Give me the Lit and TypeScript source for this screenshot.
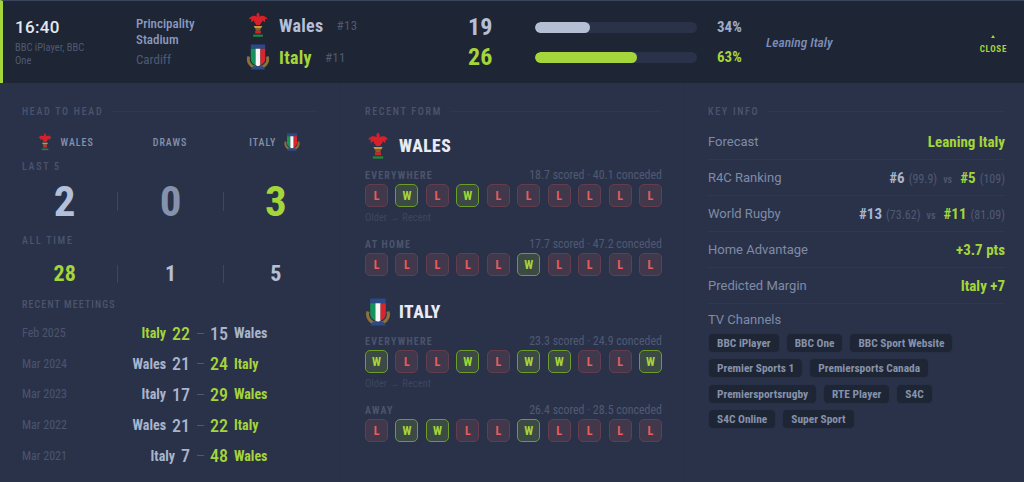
import { LitElement, html, css, svg } from "lit";
import { customElement } from "lit/decorators.js";

const walesCrest = svg`
  <g fill="#d6202a">
    <path d="M12 .5c1.700 1.300 2 3 1.300 4.500 1.500-1 3.300-1.300 5.100-.7 1.700.6 3 1.800 3.600 3.500-1.100-.6-2.100-.6-2.900 0 .5 1 .4 2-.3 2.900-.6-1-1.400-1.700-2.500-1.900.1 1.300-.4 2.300-1.400 3.100l-.9 1.600h-3.800l-.9-1.600c-1-.8-1.500-1.800-1.400-3.100-1.100.2-1.900.9-2.500 1.900-.7-.9-.8-1.900-.3-2.900-.8-.6-1.800-.6-2.900 0 .6-1.700 1.900-2.900 3.600-3.500 1.800-.6 3.600-.3 5.100.7C10 3.500 10.300 1.800 12 .5z"/>
    <rect x="9" y="19.500" width="6" height="2.800" rx=".6"/>
  </g>
  <path d="M7.500 14.500h9l-1.200 2.200H8.700z" fill="#c49a3e"/>
  <path d="M9 16.700h6l-.8 2.800H9.800z" fill="#8f5a2c"/>
  <rect x="7" y="23.500" width="10" height="2.200" fill="#1f8a3a"/>
`;

const italyCrest = svg`
  <path d="M2.500 13c-2 5 1.500 10.500 7.500 11.500M21.500 13c2 5-1.500 10.500-7.500 11.500" fill="none" stroke="#8a7238" stroke-width="3"/>
  <path d="M7 23h10l2.500 3.500h-15z" fill="#2c4a86"/>
  <rect x="4.500" y=".5" width="15" height="4.500" fill="#2c4a86"/>
  <path d="M4.500 5h5v17c-3-1.300-5-3.500-5-6.500z" fill="#16935a"/>
  <path d="M9.500 5h5v17l-2.500 1-2.500-1z" fill="#f7f7f7"/>
  <path d="M14.500 5h5v10.500c0 3-2 5.200-5 6.500z" fill="#d8262f"/>
`;

const crest = (team: string, w: number, h: number) => html`
  <svg class="crest" width=${w} height=${h} viewBox="0 0 24 27">
    ${team === "wales" ? walesCrest : italyCrest}
  </svg>
`;

const meetings = [
  { date: "Feb 2025", home: "Italy", hs: 22, as: 15, away: "Wales", homeWon: true },
  { date: "Mar 2024", home: "Wales", hs: 21, as: 24, away: "Italy", homeWon: false },
  { date: "Mar 2023", home: "Italy", hs: 17, as: 29, away: "Wales", homeWon: false },
  { date: "Mar 2022", home: "Wales", hs: 21, as: 22, away: "Italy", homeWon: false },
  { date: "Mar 2021", home: "Italy", hs: 7, as: 48, away: "Wales", homeWon: false },
];

const form = [
  {
    team: "wales",
    name: "WALES",
    rows: [
      { label: "EVERYWHERE", stats: "18.7 scored · 40.1 conceded", res: "LWLWLLLLLL", hint: true },
      { label: "AT HOME", stats: "17.7 scored · 47.2 conceded", res: "LLLLLWLLLL", hint: false },
    ],
  },
  {
    team: "italy",
    name: "ITALY",
    rows: [
      { label: "EVERYWHERE", stats: "23.3 scored · 24.9 conceded", res: "WLLWLWWLLW", hint: true },
      { label: "AWAY", stats: "26.4 scored · 28.5 conceded", res: "LWWLLWLLLL", hint: false },
    ],
  },
];

const channels = [
  "BBC iPlayer",
  "BBC One",
  "BBC Sport Website",
  "Premier Sports 1",
  "Premiersports Canada",
  "Premiersportsrugby",
  "RTE Player",
  "S4C",
  "S4C Online",
  "Super Sport",
];

@customElement("app-root")
export class AppRoot extends LitElement {
  static styles = css`
    :host {
      display: block;
      width: 1024px;
      height: 482px;
      overflow: hidden;
      background: #2a324a;
      font-family: Roboto, "Liberation Sans", sans-serif;
      color: #b4bfd4;
    }
    .cond {
      font-stretch: 75%;
    }
    .crest {
      display: block;
      flex: none;
    }
    header {
      display: flex;
      align-items: center;
      height: 83px;
      box-sizing: border-box;
      background: #1e2535;
      border-top: 1px solid #3a4560;
      border-left: 3px solid #a4d53a;
    }
    .time {
      width: 133px;
      box-sizing: border-box;
      padding: 0 40px 0 12px;
      flex: none;
    }
    .time b {
      display: block;
      font-size: 17px;
      font-weight: 500;
      letter-spacing: 0.3px;
      color: #e4e8f0;
      line-height: 19px;
      margin-bottom: 4px;
    }
    .time span {
      display: block;
      font-size: 10.500px;
      line-height: 13px;
      color: #4f5a72;
    }
    .venue {
      width: 110px;
      flex: none;
      font-size: 13px;
      line-height: 16px;
    }
    .venue b {
      display: block;
      font-weight: 500;
      color: #8c9ac0;
      width: 70px;
    }
    .venue span {
      display: block;
      color: #4f5a72;
      margin-top: 4px;
    }
    .teams {
      width: 222px;
      flex: none;
      display: flex;
      flex-direction: column;
      gap: 2px;
      padding-bottom: 2px;
    }
    .team {
      display: flex;
      align-items: center;
      gap: 9px;
      height: 30px;
      font-size: 18px;
      font-weight: 700;
      letter-spacing: 0.3px;
      color: #b4bfd8;
    }
    .team.win,
    .score.win,
    .pct.win {
      color: #a4d53a;
    }
    .team small {
      font-size: 13px;
      font-weight: 400;
      color: #4f5a72;
      margin-left: 4px;
    }
    .scores {
      width: 67px;
      flex: none;
      display: flex;
      flex-direction: column;
    }
    .score {
      height: 30px;
      line-height: 30px;
      font-size: 24px;
      font-weight: 700;
      color: #b4bfd8;
    }
    .bars {
      width: 231px;
      flex: none;
      display: flex;
      flex-direction: column;
    }
    .bar-row {
      display: flex;
      align-items: center;
      gap: 20px;
      height: 30px;
    }
    .track {
      width: 162px;
      height: 11px;
      border-radius: 6px;
      background: #2a324a;
      overflow: hidden;
    }
    .fill {
      height: 100%;
      border-radius: 6px;
      background: #b4bfd4;
    }
    .fill.win {
      background: #a4d53a;
    }
    .pct {
      font-size: 15px;
      font-weight: 700;
      color: #9fadcc;
    }
    .lean {
      flex: 1;
      font-size: 13.500px;
      font-weight: 500;
      font-style: italic;
      color: #7d8fb8;
    }
    .close {
      flex: none;
      margin-right: 17px;
      display: flex;
      flex-direction: column;
      align-items: center;
      padding-top: 4px;
      font-size: 9px;
      font-weight: 700;
      letter-spacing: 0.7px;
      color: #a4d53a;
    }
    .close i {
      display: block;
      width: 0;
      height: 0;
      margin-bottom: 6px;
      border-left: 2px solid transparent;
      border-right: 2px solid transparent;
      border-bottom: 3px solid #a4d53a;
    }
    main {
      display: grid;
      grid-template-columns: 340px 344px 340px;
      height: 399px;
    }
    section {
      box-sizing: border-box;
      padding: 22px 22px 0 22px;
    }
    section + section {
      border-left: 1px solid #283046;
      padding-left: 24px;
    }
    section:last-child {
      padding: 22px 19px 0 23px;
    }
    .head {
      display: flex;
      align-items: center;
      gap: 8px;
      height: 12px;
      font-size: 10px;
      font-weight: 500;
      letter-spacing: 1.700px;
      color: #4a556d;
      white-space: nowrap;
    }
    .head::after {
      content: "";
      flex: 1;
      height: 1px;
      background: #2f3850;
    }
    .h2h {
      display: grid;
      grid-template-columns: 1fr 1fr 1fr;
      align-items: center;
      justify-items: center;
      margin: 13px -10px 7px;
      height: 24px;
      font-size: 10px;
      font-weight: 500;
      letter-spacing: 1px;
      color: #8692ab;
    }
    .h2h div {
      display: flex;
      align-items: center;
      gap: 7px;
    }
    .sub {
      font-size: 10px;
      font-weight: 500;
      letter-spacing: 1.700px;
      color: #4a556d;
      line-height: 12px;
    }
    .sub.tight {
      letter-spacing: 1.100px;
    }
    .tally {
      display: grid;
      grid-template-columns: 1fr 1fr 1fr;
      align-items: center;
      margin-left: -10px;
      margin-right: -10px;
      font-weight: 700;
      color: #b4bfd8;
    }
    .tally div {
      text-align: center;
    }
    .tally div + div {
      border-left: 1px solid #3b465f;
    }
    .tally.big {
      height: 47px;
      margin-top: 5px;
      margin-bottom: 10px;
      font-size: 43px;
    }
    .tally.big div {
      line-height: 19px;
      height: 19px;
    }
    .tally.small {
      height: 30px;
      margin-top: 12px;
      margin-bottom: 10px;
      font-size: 22px;
    }
    .tally.small div {
      line-height: 18px;
      height: 18px;
    }
    .tally .win {
      color: #a4d53a;
    }
    .tally .draw {
      color: #8692ab;
    }
    .meetings {
      margin-top: 7px;
    }
    .meet {
      display: grid;
      grid-template-columns: 90px 78px 20px 1fr;
      align-items: center;
      height: 30.600px;
    }
    .meet .date {
      font-size: 12px;
      color: #4a556d;
    }
    .side {
      display: flex;
      align-items: center;
      gap: 6px;
      font-size: 14px;
      font-weight: 700;
      color: #a9b5cc;
    }
    .side.l {
      justify-content: flex-end;
    }
    .side b {
      font-size: 18px;
      font-weight: 500;
    }
    .side.win {
      color: #a4d53a;
    }
    .dash {
      width: 7px;
      height: 1px;
      justify-self: center;
      background: #4f5a72;
    }
    .form-team {
      display: flow-root;
      margin-top: 15px;
    }
    .form-team + .form-team {
      margin-top: 10px;
    }
    .fteam {
      display: flex;
      align-items: center;
      gap: 8px;
      height: 28px;
      margin-bottom: 8px;
      font-size: 17.500px;
      font-weight: 800;
      letter-spacing: 0.5px;
      color: #e8ebf2;
    }
    .frow {
      margin-bottom: 12px;
    }
    .frow-head {
      display: flex;
      justify-content: space-between;
      align-items: center;
      height: 14px;
      font-size: 11.900px;
      color: #4f5a72;
    }
    .frow-head b {
      font-size: 10px;
      font-weight: 700;
      letter-spacing: 1.250px;
      color: #4a556d;
    }
    .pills {
      display: flex;
      justify-content: space-between;
      margin-top: 2px;
    }
    .pill {
      width: 23px;
      height: 23px;
      box-sizing: border-box;
      border-radius: 5px;
      display: flex;
      align-items: center;
      justify-content: center;
      font-size: 12px;
      font-weight: 700;
      border: 1px solid #643e4e;
      background: #41384b;
      color: #e85d5d;
    }
    .pill.w {
      border-color: #6e9c2a;
      background: #3c4a45;
      color: #a4d53a;
    }
    .hint {
      font-size: 10.500px;
      color: #3b465f;
      margin-top: 4px;
      line-height: 14px;
    }
    .infos {
      margin-top: 7px;
    }
    .info {
      display: flex;
      justify-content: space-between;
      align-items: center;
      height: 36px;
      box-sizing: border-box;
      border-bottom: 1px solid #2f3850;
      font-size: 13px;
      font-stretch: 100%;
      color: #7f8ba5;
    }
    .info .v {
      display: flex;
      align-items: baseline;
      gap: 4px;
      font-size: 15px;
      font-stretch: 75%;
      font-weight: 700;
      color: #a4d53a;
    }
    .v .a {
      color: #a9b5cc;
    }
    .v small {
      font-size: 12px;
      font-weight: 400;
      color: #4f5a72;
    }
    .v em {
      font-style: normal;
      font-size: 10px;
      font-weight: 500;
      color: #4f5a72;
      margin: 0 4px 0 2px;
    }
    .tv {
      font-size: 13px;
      font-stretch: 100%;
      color: #7f8ba5;
      margin-top: 7px;
      line-height: 18px;
    }
    .chips {
      display: flex;
      flex-wrap: wrap;
      gap: 5.400px 6px;
      margin-top: 4px;
      width: 290px;
    }
    .chip {
      height: 20px;
      line-height: 18px;
      box-sizing: border-box;
      padding: 0 8px;
      border-radius: 5px;
      border: 1px solid #283048;
      background: #1e2535;
      font-size: 11.400px;
      font-weight: 700;
      color: #8692ab;
    }
  `;

  private _form() {
    return form.map(
      (t) => html`
        <div class="form-team">
          <div class="fteam">${crest(t.team, 26, 28)} ${t.name}</div>
          ${t.rows.map(
            (r) => html`
              <div class="frow">
                <div class="frow-head">
                  <b>${r.label}</b><span>${r.stats}</span>
                </div>
                <div class="pills">
                  ${r.res.split("").map(
                    (c) =>
                      html`<div class="pill ${c === "W" ? "w" : ""}">${c}</div>`,
                  )}
                </div>
                ${r.hint ? html`<div class="hint">Older → Recent</div>` : ""}
              </div>
            `,
          )}
        </div>
      `,
    );
  }

  render() {
    return html`
      <header>
        <div class="time">
          <b>16:40</b>
          <span class="cond">BBC iPlayer, BBC One</span>
        </div>
        <div class="venue cond">
          <b>Principality Stadium</b>
          <span>Cardiff</span>
        </div>
        <div class="teams cond">
          <div class="team">
            ${crest("wales", 24, 26)} Wales <small>#13</small>
          </div>
          <div class="team win">
            ${crest("italy", 24, 26)} Italy <small>#11</small>
          </div>
        </div>
        <div class="scores cond">
          <div class="score">19</div>
          <div class="score win">26</div>
        </div>
        <div class="bars cond">
          <div class="bar-row">
            <div class="track"><div class="fill" style="width:34%"></div></div>
            <span class="pct">34%</span>
          </div>
          <div class="bar-row">
            <div class="track">
              <div class="fill win" style="width:63%"></div>
            </div>
            <span class="pct win">63%</span>
          </div>
        </div>
        <div class="lean cond">Leaning Italy</div>
        <div class="close cond"><i></i>CLOSE</div>
      </header>
      <main class="cond">
        <section>
          <div class="head">HEAD TO HEAD</div>
          <div class="h2h">
            <div>${crest("wales", 18, 18)} WALES</div>
            <div>DRAWS</div>
            <div>ITALY ${crest("italy", 18, 18)}</div>
          </div>
          <div class="sub">LAST 5</div>
          <div class="tally big">
            <div>2</div>
            <div class="draw">0</div>
            <div class="win">3</div>
          </div>
          <div class="sub">ALL TIME</div>
          <div class="tally small">
            <div class="win">28</div>
            <div>1</div>
            <div>5</div>
          </div>
          <div class="sub tight">RECENT MEETINGS</div>
          <div class="meetings">
            ${meetings.map(
              (m) => html`
                <div class="meet">
                  <span class="date">${m.date}</span>
                  <div class="side l ${m.homeWon ? "win" : ""}">
                    ${m.home} <b>${m.hs}</b>
                  </div>
                  <i class="dash"></i>
                  <div class="side ${m.homeWon ? "" : "win"}">
                    <b>${m.as}</b> ${m.away}
                  </div>
                </div>
              `,
            )}
          </div>
        </section>
        <section>
          <div class="head">RECENT FORM</div>
          ${this._form()}
        </section>
        <section>
          <div class="head">KEY INFO</div>
          <div class="infos">
            <div class="info">
              <span>Forecast</span><span class="v">Leaning Italy</span>
            </div>
            <div class="info">
              <span>R4C Ranking</span>
              <span class="v">
                <span class="a">#6</span><small>(99.9)</small><em>vs</em>
                <span>#5</span><small>(109)</small>
              </span>
            </div>
            <div class="info">
              <span>World Rugby</span>
              <span class="v">
                <span class="a">#13</span><small>(73.62)</small><em>vs</em>
                <span>#11</span><small>(81.09)</small>
              </span>
            </div>
            <div class="info">
              <span>Home Advantage</span><span class="v">+3.7 pts</span>
            </div>
            <div class="info">
              <span>Predicted Margin</span><span class="v">Italy +7</span>
            </div>
          </div>
          <div class="tv">TV Channels</div>
          <div class="chips">
            ${channels.map((c) => html`<span class="chip">${c}</span>`)}
          </div>
        </section>
      </main>
    `;
  }
}
